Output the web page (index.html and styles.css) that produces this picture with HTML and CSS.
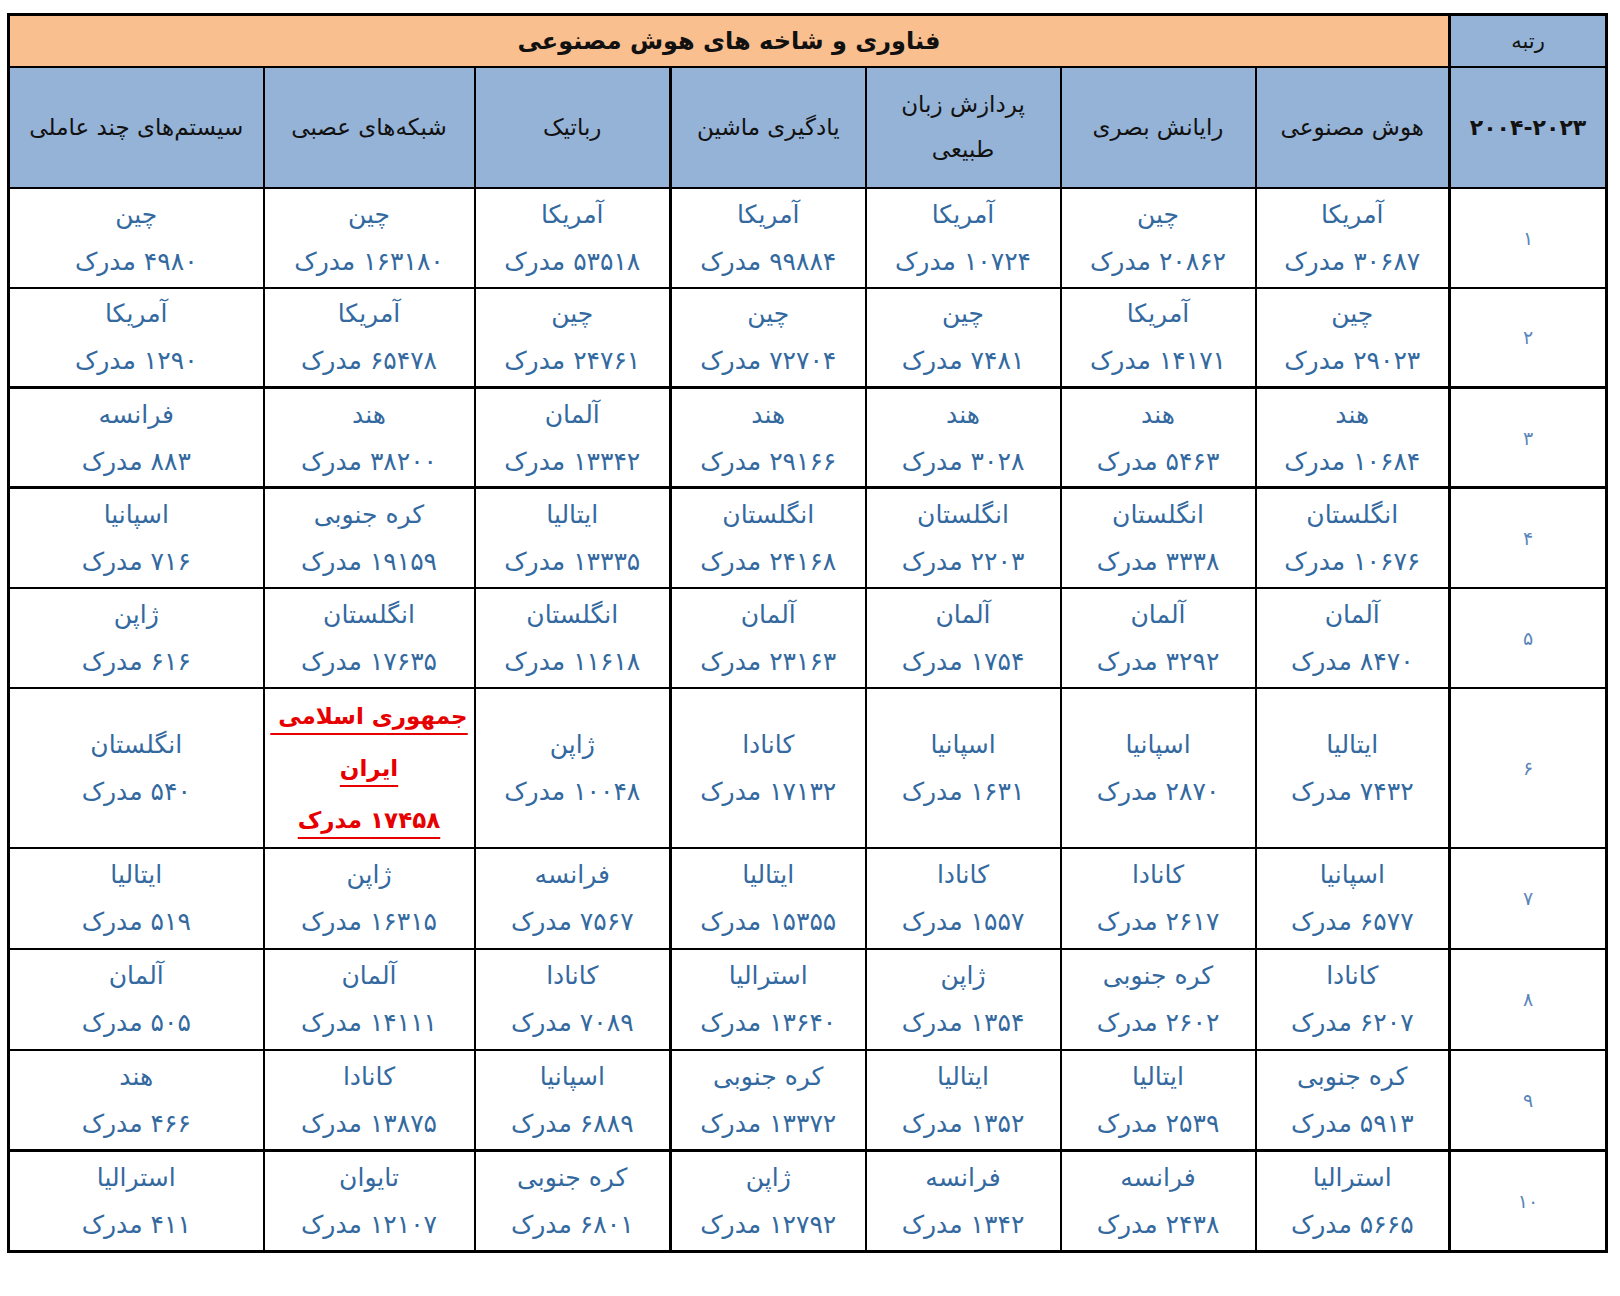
FILE: index.html
```html
<!DOCTYPE html>
<html lang="fa">
<head>
<meta charset="utf-8">
<title>فناوری و شاخه های هوش مصنوعی</title>
<link rel="stylesheet" href="styles.css">
</head>
<body>
<div class="page">
<table class="grid" dir="rtl">
  <colgroup>
    <col class="w-rank"><col class="w-ai"><col class="w-cv"><col class="w-nlp"><col class="w-ml"><col class="w-rob"><col class="w-nn"><col class="w-ma">
  </colgroup>
  <tr class="r-title">
    <td class="rank-head">رتبه</td>
    <td class="title" colspan="7">فناوری و شاخه های هوش مصنوعی</td>
  </tr>
  <tr class="r-head">
    <td class="rank-head years">۲۰۰۴-۲۰۲۳</td>
    <td class="head">هوش مصنوعی</td>
    <td class="head">رایانش بصری</td>
    <td class="head">پردازش زبان<br>طبیعی</td>
    <td class="head thick-l">یادگیری ماشین</td>
    <td class="head">رباتیک</td>
    <td class="head">شبکه‌های عصبی</td>
    <td class="head">سیستم‌های چند عاملی</td>
  </tr>
  <tr class="r-data">
    <td class="rank">۱</td>
    <td class="d">آمریکا<br>۳۰۶۸۷ مدرک</td>
    <td class="d">چین<br>۲۰۸۶۲ مدرک</td>
    <td class="d">آمریکا<br>۱۰۷۲۴ مدرک</td>
    <td class="d thick-l">آمریکا<br>۹۹۸۸۴ مدرک</td>
    <td class="d">آمریکا<br>۵۳۵۱۸ مدرک</td>
    <td class="d">چین<br>۱۶۳۱۸۰ مدرک</td>
    <td class="d">چین<br>۴۹۸۰ مدرک</td>
  </tr>
  <tr class="r-data thick-b">
    <td class="rank">۲</td>
    <td class="d">چین<br>۲۹۰۲۳ مدرک</td>
    <td class="d">آمریکا<br>۱۴۱۷۱ مدرک</td>
    <td class="d">چین<br>۷۴۸۱ مدرک</td>
    <td class="d thick-l">چین<br>۷۲۷۰۴ مدرک</td>
    <td class="d">چین<br>۲۴۷۶۱ مدرک</td>
    <td class="d">آمریکا<br>۶۵۴۷۸ مدرک</td>
    <td class="d">آمریکا<br>۱۲۹۰ مدرک</td>
  </tr>
  <tr class="r-data thick-b">
    <td class="rank">۳</td>
    <td class="d">هند<br>۱۰۶۸۴ مدرک</td>
    <td class="d">هند<br>۵۴۶۳ مدرک</td>
    <td class="d">هند<br>۳۰۲۸ مدرک</td>
    <td class="d thick-l">هند<br>۲۹۱۶۶ مدرک</td>
    <td class="d">آلمان<br>۱۳۳۴۲ مدرک</td>
    <td class="d">هند<br>۳۸۲۰۰ مدرک</td>
    <td class="d">فرانسه<br>۸۸۳ مدرک</td>
  </tr>
  <tr class="r-data">
    <td class="rank">۴</td>
    <td class="d">انگلستان<br>۱۰۶۷۶ مدرک</td>
    <td class="d">انگلستان<br>۳۳۳۸ مدرک</td>
    <td class="d">انگلستان<br>۲۲۰۳ مدرک</td>
    <td class="d thick-l">انگلستان<br>۲۴۱۶۸ مدرک</td>
    <td class="d">ایتالیا<br>۱۳۳۳۵ مدرک</td>
    <td class="d">کره جنوبی<br>۱۹۱۵۹ مدرک</td>
    <td class="d">اسپانیا<br>۷۱۶ مدرک</td>
  </tr>
  <tr class="r-data">
    <td class="rank">۵</td>
    <td class="d">آلمان<br>۸۴۷۰ مدرک</td>
    <td class="d">آلمان<br>۳۲۹۲ مدرک</td>
    <td class="d">آلمان<br>۱۷۵۴ مدرک</td>
    <td class="d thick-l">آلمان<br>۲۳۱۶۳ مدرک</td>
    <td class="d">انگلستان<br>۱۱۶۱۸ مدرک</td>
    <td class="d">انگلستان<br>۱۷۶۳۵ مدرک</td>
    <td class="d">ژاپن<br>۶۱۶ مدرک</td>
  </tr>
  <tr class="r-tall">
    <td class="rank">۶</td>
    <td class="d">ایتالیا<br>۷۴۳۲ مدرک</td>
    <td class="d">اسپانیا<br>۲۸۷۰ مدرک</td>
    <td class="d">اسپانیا<br>۱۶۳۱ مدرک</td>
    <td class="d thick-l">کانادا<br>۱۷۱۳۲ مدرک</td>
    <td class="d">ژاپن<br>۱۰۰۴۸ مدرک</td>
    <td class="hl"><span class="hl-line">جمهوری اسلامی&nbsp;</span><br><span class="hl-line">ایران</span><br><span class="hl-line">۱۷۴۵۸ مدرک</span></td>
    <td class="d">انگلستان<br>۵۴۰ مدرک</td>
  </tr>
  <tr class="r-data r-low">
    <td class="rank">۷</td>
    <td class="d">اسپانیا<br>۶۵۷۷ مدرک</td>
    <td class="d">کانادا<br>۲۶۱۷ مدرک</td>
    <td class="d">کانادا<br>۱۵۵۷ مدرک</td>
    <td class="d thick-l">ایتالیا<br>۱۵۳۵۵ مدرک</td>
    <td class="d">فرانسه<br>۷۵۶۷ مدرک</td>
    <td class="d">ژاپن<br>۱۶۳۱۵ مدرک</td>
    <td class="d">ایتالیا<br>۵۱۹ مدرک</td>
  </tr>
  <tr class="r-data r-low">
    <td class="rank">۸</td>
    <td class="d">کانادا<br>۶۲۰۷ مدرک</td>
    <td class="d">کره جنوبی<br>۲۶۰۲ مدرک</td>
    <td class="d">ژاپن<br>۱۳۵۴ مدرک</td>
    <td class="d thick-l">استرالیا<br>۱۳۶۴۰ مدرک</td>
    <td class="d">کانادا<br>۷۰۸۹ مدرک</td>
    <td class="d">آلمان<br>۱۴۱۱۱ مدرک</td>
    <td class="d">آلمان<br>۵۰۵ مدرک</td>
  </tr>
  <tr class="r-data r-low thick-b">
    <td class="rank">۹</td>
    <td class="d">کره جنوبی<br>۵۹۱۳ مدرک</td>
    <td class="d">ایتالیا<br>۲۵۳۹ مدرک</td>
    <td class="d">ایتالیا<br>۱۳۵۲ مدرک</td>
    <td class="d thick-l">کره جنوبی<br>۱۳۳۷۲ مدرک</td>
    <td class="d">اسپانیا<br>۶۸۸۹ مدرک</td>
    <td class="d">کانادا<br>۱۳۸۷۵ مدرک</td>
    <td class="d">هند<br>۴۶۶ مدرک</td>
  </tr>
  <tr class="r-data r-low">
    <td class="rank">۱۰</td>
    <td class="d">استرالیا<br>۵۶۶۵ مدرک</td>
    <td class="d">فرانسه<br>۲۴۳۸ مدرک</td>
    <td class="d">فرانسه<br>۱۳۴۲ مدرک</td>
    <td class="d thick-l">ژاپن<br>۱۲۷۹۲ مدرک</td>
    <td class="d">کره جنوبی<br>۶۸۰۱ مدرک</td>
    <td class="d">تایوان<br>۱۲۱۰۷ مدرک</td>
    <td class="d">استرالیا<br>۴۱۱ مدرک</td>
  </tr>
</table>
</div>
</body>
</html>
```

FILE: styles.css
```css
html, body {
  margin: 0;
  padding: 0;
  background: #ffffff;
}

.page {
  padding: 13px 0 0 7px;
}

.grid {
  border-collapse: collapse;
  table-layout: fixed;
  width: 1598px;
  font-family: "DejaVu Sans", "Noto Sans", sans-serif;
  border: 3px solid #000;
}

.w-rank { width: 157px; }
.w-ai { width: 194px; }
.w-cv { width: 195px; }
.w-nlp { width: 195px; }
.w-ml { width: 195px; }
.w-rob { width: 196px; }
.w-nn { width: 211px; }
.w-ma { width: 255px; }

.grid td {
  border: 2px solid #000;
  text-align: center;
  vertical-align: middle;
  padding: 0;
}

.r-title { height: 52px; }
.r-head { height: 121px; }
.r-data { height: 100px; }
.r-low { height: 101px; }
.r-tall { height: 160px; }

.title {
  background: #fabf8f;
  color: #111;
  font-weight: bold;
  font-size: 24px;
  line-height: 30px;
}

.rank-head {
  background: #95b3d7;
  color: #111;
  font-size: 21px;
  border-left-width: 3px !important;
}

.years {
  font-weight: bold;
  font-size: 22px;
}

.head {
  background: #95b3d7;
  color: #111;
  font-size: 23px;
  line-height: 45px;
}

.d {
  color: #33699f;
  font-size: 25px;
  line-height: 47px;
}

.rank {
  color: #5a86b8;
  font-size: 19px;
  border-left-width: 3px !important;
}

.thick-l {
  border-left-width: 3px !important;
}

.thick-b td {
  border-bottom-width: 3px;
}

.hl {
  color: #e60000;
  font-weight: bold;
  font-size: 23px;
  line-height: 52px;
}

.hl-line {
  text-decoration: underline;
  text-decoration-thickness: 2px;
  text-underline-offset: 9px;
}
```
